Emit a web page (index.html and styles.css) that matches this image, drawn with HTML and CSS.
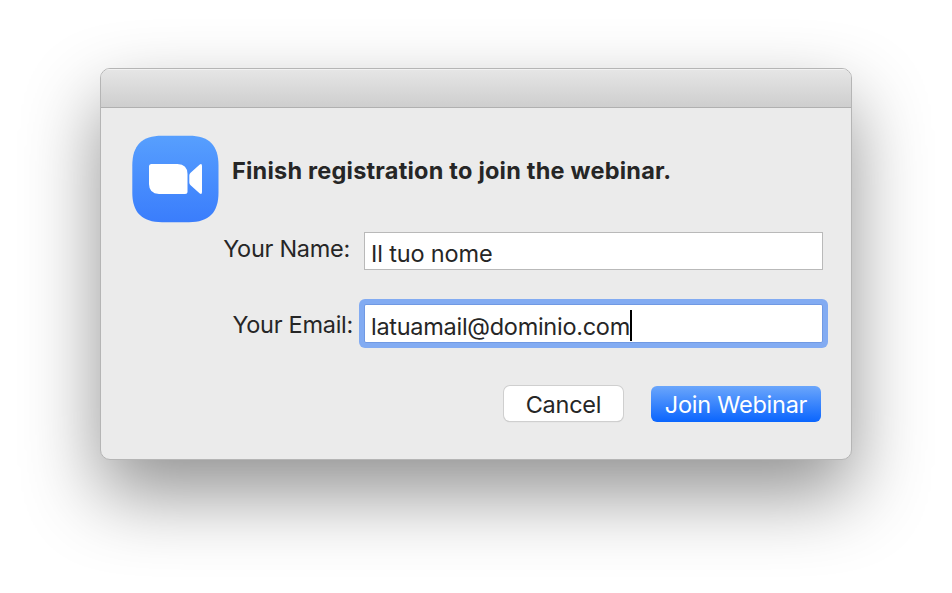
FILE: index.html
```html
<!DOCTYPE html>
<html lang="en">
<head>
  <meta charset="UTF-8">
  <title>Join Webinar</title>
  <link rel="stylesheet" href="styles.css">
</head>
<body>

  <div class="dialog">
    <div class="titlebar"></div>
    <div class="content">
      <div class="header">
        <svg class="logo" viewBox="0 0 87 87">
          <defs>
            <linearGradient id="blue" x1="0" y1="0" x2="0" y2="1">
              <stop offset="0" stop-color="#579ffe"/>
              <stop offset="1" stop-color="#3a7dfc"/>
            </linearGradient>
          </defs>
          <path fill="url(#blue)" d="M30 .3H57C77 .3 86.500 10 86.500 30V57C86.500 77 77 86.700 57 86.700H30C10 86.700 .3 77 .3 57V30C.3 10 10 .3 30 .3Z"/>
          <path fill="#fff" d="M19.500 28.500H45.500Q55.500 29 55.500 38.500V56Q55.500 58.500 53 58.500H27Q17 58 17 48.500V31Q17 28.500 19.500 28.500Z"/>
          <path fill="#fff" d="M57.300 40Q57.300 38.300 58.600 37.200L67.500 29.200Q70 27.500 70 30.500V56.500Q70 59.500 67.500 57.800L58.600 49.800Q57.300 48.700 57.300 47Z"/>
        </svg>
        <h1>Finish registration to join the webinar.</h1>
      </div>

      <div class="row name">
        <label>Your Name:</label>
        <div class="field">Il tuo nome</div>
      </div>
      <div class="row email">
        <label>Your Email:</label>
        <div class="field focused">latuamail@dominio.com<span class="caret"></span></div>
      </div>

      <div class="buttons">
        <button class="cancel">Cancel</button>
        <button class="join">Join Webinar</button>
      </div>
    </div>
  </div>

</body>
</html>
```
FILE: styles.css
```css
* {
  box-sizing: border-box;
}
body {
  margin: 0;
  padding: 68px 100px 0;
  height: 593px;
  overflow: hidden;
  background: #fff;
  color: #262626;
  font-family: Inter, "Liberation Sans", sans-serif;
  font-size: 23.5px;
}
.dialog {
  width: 752px;
  height: 392px;
  border: 1px solid #b5b5b5;
  border-radius: 10px;
  background: #ebebeb;
  overflow: hidden;
  box-shadow: 0 34px 76px rgba(0, 0, 0, 0.43);
}
.titlebar {
  height: 39px;
  border-bottom: 1px solid #b0b0b0;
  background: linear-gradient(#e6e6e6, #cecece);
  box-shadow: inset 0 1px #f2f2f2;
}
.content {
  padding: 27px 28px 0 31px;
}
.header {
  display: flex;
  gap: 13px;
}
.logo {
  width: 87px;
  height: 88px;
}
h1 {
  margin: 20px 0 0;
  font-size: 23.5px;
  line-height: 32px;
  font-weight: 700;
  letter-spacing: 0.22px;
  white-space: nowrap;
}
.row {
  display: flex;
  justify-content: flex-end;
  letter-spacing: -0.28px;
}
.row label {
  line-height: 32px;
  white-space: nowrap;
}
.field {
  width: 459px;
  height: 38px;
  padding: 5px 6px 0;
  border: 1px solid #b9b9b9;
  background: #fff;
  line-height: 32px;
  white-space: nowrap;
}
.name {
  margin-top: 9px;
}
.name label {
  margin: 1px 14px 0 0;
}
.name .field {
  letter-spacing: -0.15px;
}
.email {
  margin-top: 34px;
}
.email label {
  margin: 5px 11px 0 0;
}
.field.focused {
  height: 39px;
  border-color: #7099e3;
  border-radius: 2px;
  box-shadow: 0 0 0 5px #82abf2;
}
.caret {
  display: inline-block;
  width: 2px;
  height: 31px;
  background: #000;
  vertical-align: -6px;
}
.buttons {
  display: flex;
  justify-content: flex-end;
  gap: 28px;
  margin: 43px 2px 0 0;
}
button {
  height: 36px;
  padding: 0;
  border: 0;
  border-radius: 6px;
  font: inherit;
  letter-spacing: -0.25px;
  white-space: nowrap;
}
.cancel {
  width: 119px;
  height: 35px;
  padding-top: 1px;
  background: #fff;
  color: #262626;
  box-shadow: 0 0 0 1px #cfcfcf, 0 1px 1px #b8b8b8;
}
.join {
  width: 170px;
  background: linear-gradient(#6ba6fb, #0a65fe);
  color: #fff;
}
```
